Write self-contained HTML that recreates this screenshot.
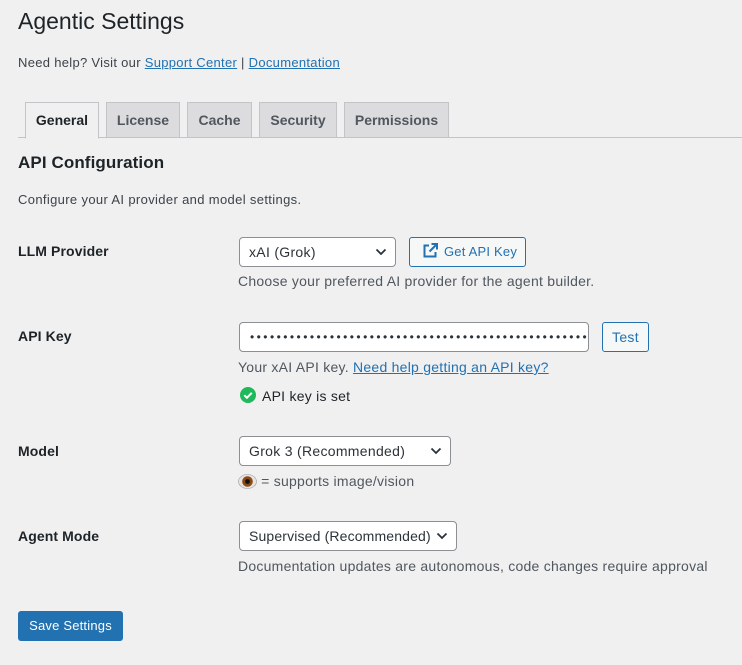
<!DOCTYPE html>
<html><head><meta charset="utf-8"><style>
*{box-sizing:border-box;margin:0;padding:0}
body{width:742px;height:665px;background:#f0f0f1;font-family:"Liberation Sans",sans-serif;font-size:13px;color:#3c434a;position:relative;overflow:hidden;letter-spacing:0.3px}
.a{position:absolute;white-space:nowrap}
a{color:#2271b1;text-decoration:underline}
.tab{position:absolute;top:102px;height:36px;border:1px solid #c3c4c7;background:#dcdcde;font-weight:bold;font-size:14px;color:#50575e;text-align:center;line-height:34px;letter-spacing:0}
.lbl{position:absolute;left:18px;font-weight:bold;font-size:14px;color:#1d2327;letter-spacing:0.1px}
.sel{position:absolute;height:30px;border:1px solid #8c8f94;border-radius:4px;background:#fff;font-size:14px;color:#2c3338;padding-left:9px;line-height:28px;white-space:nowrap}
.sel svg{position:absolute;right:8px;top:10px}
.btn{position:absolute;height:30px;border:1px solid #2271b1;border-radius:3px;background:#f6f7f7;color:#2271b1;font-size:13px;line-height:28px;text-align:center;white-space:nowrap}
.desc{position:absolute;left:238px;font-size:14px;color:#50575e;white-space:nowrap;letter-spacing:0.25px}
</style></head><body>
<div class="a" style="left:18px;top:8px;font-size:23px;color:#1d2327;letter-spacing:0">Agentic Settings</div>
<div class="a" style="left:18px;top:55px;letter-spacing:0.3px">Need help? Visit our <a>Support Center</a> | <a>Documentation</a></div>
<div class="a" style="left:18px;top:137px;width:724px;height:1px;background:#c3c4c7"></div>
<div class="tab" style="left:25px;width:74px;background:#f0f0f1;color:#1d2327;border-bottom-color:#f0f0f1;height:37px">General</div>
<div class="tab" style="left:106px;width:74px">License</div>
<div class="tab" style="left:187px;width:65px">Cache</div>
<div class="tab" style="left:259px;width:78px">Security</div>
<div class="tab" style="left:344px;width:105px">Permissions</div>
<div class="a" style="left:18px;top:153px;font-size:17px;font-weight:bold;color:#1d2327;letter-spacing:0.1px">API Configuration</div>
<div class="a" style="left:18px;top:192px;letter-spacing:0.35px">Configure your AI provider and model settings.</div>

<div class="lbl" style="top:243px">LLM Provider</div>
<div class="sel" style="left:239px;top:237px;width:157px">xAI (Grok)<svg width="12" height="8" viewBox="0 0 12 8"><path d="M1.5 1.5l4.5 4.5 4.5-4.5" fill="none" stroke="#2c3338" stroke-width="1.8"/></svg></div>
<div class="btn" style="left:409px;top:237px;width:117px;padding-left:34px;font-size:13px;text-align:left;letter-spacing:0.2px"><svg style="position:absolute;left:13px;top:5px" width="15" height="15" viewBox="0 0 15 15"><path d="M6 2.5H1.5v11h11V9" fill="none" stroke="#2271b1" stroke-width="2"/><path d="M8.5 1H14v5.5M14 1L6.5 8.5" fill="none" stroke="#2271b1" stroke-width="2"/></svg>Get API Key</div>
<div class="desc" style="top:273px">Choose your preferred AI provider for the agent builder.</div>

<div class="lbl" style="top:328px">API Key</div>
<div class="sel" style="left:239px;top:322px;width:350px;padding-left:10px;overflow:hidden;font-size:12px;letter-spacing:2.45px;line-height:28px">•••••••••••••••••••••••••••••••••••••••••••••••••••</div>
<div class="btn" style="left:602px;top:322px;width:47px;font-size:14px">Test</div>
<div class="desc" style="top:359px">Your xAI API key. <a>Need help getting an API key?</a></div>
<svg class="a" style="left:240px;top:387px" width="16" height="16" viewBox="0 0 16 16"><circle cx="8" cy="8" r="8" fill="#1fb85a"/><path d="M4.3 8.2l2.6 2.6 4.9-5" fill="none" stroke="#fff" stroke-width="2"/></svg>
<div class="desc" style="left:262px;top:388px;color:#1d2327">API key is set</div>

<div class="lbl" style="top:443px">Model</div>
<div class="sel" style="left:239px;top:436px;width:212px">Grok 3 (Recommended)<svg width="12" height="8" viewBox="0 0 12 8"><path d="M1.5 1.5l4.5 4.5 4.5-4.5" fill="none" stroke="#2c3338" stroke-width="1.8"/></svg></div>
<div class="desc" style="top:473px"><svg style="vertical-align:-3px" width="19" height="15" viewBox="0 0 19 15"><ellipse cx="9.5" cy="7.5" rx="9" ry="7" fill="#e8e4e0" stroke="#999" stroke-width=".6"/><circle cx="9.5" cy="7.5" r="5.3" fill="#8a4a16"/><circle cx="9.5" cy="7.5" r="2.4" fill="#111"/></svg> = supports image/vision</div>

<div class="lbl" style="top:528px">Agent Mode</div>
<div class="sel" style="left:239px;top:521px;width:218px;letter-spacing:0.15px">Supervised (Recommended)<svg width="12" height="8" viewBox="0 0 12 8"><path d="M1.5 1.5l4.5 4.5 4.5-4.5" fill="none" stroke="#2c3338" stroke-width="1.8"/></svg></div>
<div class="desc" style="top:558px">Documentation updates are autonomous, code changes require approval</div>

<div class="a" style="left:18px;top:611px;width:105px;height:30px;background:#2271b1;border-radius:3px;color:#fff;font-size:13px;text-align:center;line-height:30px;letter-spacing:0.2px">Save Settings</div>
</body></html>
